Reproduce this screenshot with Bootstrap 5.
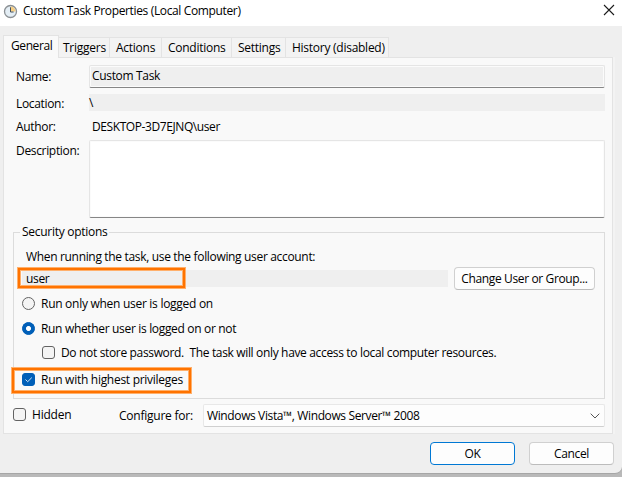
<!DOCTYPE html>
<html lang="en">
<head>
<meta charset="utf-8">
<title>Custom Task Properties</title>
<link href="https://cdn.jsdelivr.net/npm/bootstrap@5.3.0/dist/css/bootstrap.min.css" rel="stylesheet">
<style>
body{width:622px;height:477px;overflow:hidden;background:#b9b9b9;font:12px/16px "Segoe UI","Open Sans","Noto Sans",sans-serif;color:#000;letter-spacing:-.33px}
span,label{white-space:pre}
.dialog{height:474px;background:#efefef;border-bottom:1px solid #a6a6a6;border-radius:0 0 7px 0}
.titlebar{height:26px;padding:0 7px 4px 3px}
.title-text{padding-left:5px;letter-spacing:-.36px}
.tabs{height:31px;padding:9px 0 0 3px;letter-spacing:-.26px}
.tabs .nav-link{height:20px;padding:2px 0 0 6px;color:#000;background:#f3f3f3;border:1px solid #e3e3e3;border-width:1px 1px 0 0;border-radius:0;line-height:16px}
.tabs .nav-link.active{height:23px;width:56px;padding:2px 0 0 7px;background:#f9f9f9;border-width:1px 1px 0 1px;margin-bottom:-1px;position:relative;z-index:1}
.panel{width:610px;height:377px;margin-left:3px;padding:7px 7px 0 9px;background:#f9f9f9;border:1px solid #e3e3e3;box-shadow:2px 0 0 #f3f3f3}
.line{display:flex;align-items:center}
.name-label{width:76px;padding-left:3px}
.field{width:516px;background:#efefef}
.edit{border:1px solid #e5e5e5;border-bottom-color:#868686;border-radius:2px;box-shadow:inset 0 0 0 1px #fbfbfb}
.group{width:592px;height:167px;margin-top:14px;border:1px solid #dcdcdc;padding:0 0 0 8px}
.group-title{width:fit-content;margin:-9px 0 0 -2px;padding:0 2px;background:#f9f9f9}
.form-check-input{width:13px;height:13px;margin:0;border:1px solid #626262;background-color:#f4f4f4;flex:none}
.form-check-input[type=checkbox]{border-radius:3px}
.form-check-input:checked{background-color:#005fb8;border-color:#005fb8}
.form-check-input:checked[type=radio]{background-image:radial-gradient(circle,#fff 0 2.1px,#005fb8 2.9px)}
.form-check-input:checked[type=checkbox]{background-image:none}
.tick{position:absolute;left:0;top:0}
.push{height:23px;padding:0;font-size:12px;line-height:20px;letter-spacing:-.37px;color:#000;background:#fdfdfd;border:1px solid #d0d0d0;border-bottom-color:#bcbcbc;border-radius:4px}
.push.ok{border-color:#0078d4}
.highlight{position:absolute;border:2px solid #ff7300;box-shadow:0 0 0 1px #ffb06c,inset 0 0 0 1px #ffb06c}
.combo{width:402px;height:23px;padding:0 4px 0 3px;background:#fdfdfd;border:1px solid #e8e8e8;border-bottom-color:#d0d0d0;border-radius:2px}
.tight{letter-spacing:-.41px}
.loose{letter-spacing:-.28px}
</style>
</head>
<body>
<main class="dialog">
<header class="titlebar d-flex align-items-center bg-white">
<svg width="15" height="15" viewBox="0 0 15 15" class="flex-shrink-0"><circle cx="7.5" cy="7.5" r="6" fill="#e4eef5" stroke="#8b9094" stroke-width="1.3"/><path d="M7.5 7.5V2.4A5.1 5.1 0 0 1 12.6 7.5Z" fill="#f7ce82"/><path d="M7.5 3.3V8H10.6" fill="none" stroke="#44525e"/></svg>
<span class="flex-grow-1 title-text">Custom Task Properties (Local Computer)</span>
<svg width="12" height="12" viewBox="0 0 12 12" style="margin-top:-2px"><path d="M1 1L11 11M11 1L1 11" stroke="#1b1b1b" stroke-width="1.1"/></svg>
</header>
<nav class="tabs nav flex-nowrap align-items-end">
<a class="nav-link active tight"><span>General</span></a>
<a class="nav-link" style="width:51px;padding-left:4px"><span>Triggers</span></a>
<a class="nav-link" style="width:52px"><span>Actions</span></a>
<a class="nav-link" style="width:70px"><span>Conditions</span></a>
<a class="nav-link" style="width:54px"><span>Settings</span></a>
<a class="nav-link" style="width:103px"><span>History (disabled)</span></a>
</nav>
<section class="panel">
<div class="line" style="height:23px"><div class="name-label"><span>Name:</span></div><div class="field edit line" style="height:23px;padding:0 0 1px 2px"><span>Custom Task</span></div></div>
<div class="line" style="height:17px;margin-top:6px"><div class="name-label" style="padding-top:3px"><span>Location:</span></div><div class="field line" style="height:17px"><span>\</span></div></div>
<div class="line" style="height:16px;margin-top:8px"><div class="name-label"><span>Author:</span></div><span class="tight" style="padding-left:3px">DESKTOP-3D7EJNQ\user</span></div>
<div class="d-flex" style="height:78px;margin-top:5px"><div class="name-label" style="padding-top:3px"><span>Description:</span></div><div class="field edit bg-white"></div></div>
<div class="group position-relative" role="group">
<div class="group-title"><span class="loose">Security options</span></div>
<div class="line" style="height:18px;margin-top:8px;padding-left:4px"><span>When running the task, use the following user account:</span></div>
<div class="line" style="height:23px;margin-top:1px"><div class="line" style="width:426px;height:17px;background:#efefef;padding-left:4px;margin-right:6px"><span>user</span></div><button class="btn push" style="width:141px"><span>Change User or Group...</span></button></div>
<div class="line" style="height:25px;margin-top:1px;gap:6px"><input class="form-check-input" type="radio" name="logon"><label class="loose">Run only when user is logged on</label></div>
<div class="line" style="height:25px;gap:6px"><input class="form-check-input" type="radio" name="logon" checked><label>Run whether user is logged on or not</label></div>
<div class="line" style="height:23px;padding-left:20px;gap:6px"><input class="form-check-input" type="checkbox"><label style="letter-spacing:-.34px">Do not store password.  The task will only have access to local computer resources.</label></div>
<div class="line" style="height:31px;gap:6px"><div class="position-relative d-flex"><input class="form-check-input" type="checkbox" checked><svg class="tick" width="13" height="13" viewBox="0 0 13 13"><path d="M3.5 6.5L5.7 8.7L9.8 4.6" fill="none" stroke="#d5e6f5"/></svg></div><label class="loose">Run with highest privileges</label></div>
<div class="highlight" style="left:4px;top:35px;width:167px;height:20px"></div>
<div class="highlight" style="left:-2px;top:135px;width:179px;height:25px"></div>
</div>
<div class="line" style="height:23px;margin-top:5px"><input class="form-check-input" type="checkbox" style="margin-top:-2px"><label style="width:93px;padding-left:6px;letter-spacing:-.2px;padding-bottom:1px">Hidden</label><label style="width:84px;letter-spacing:-.24px">Configure for:</label><div class="combo line justify-content-between flex-shrink-0"><span style="letter-spacing:-.38px">Windows Vista™, Windows Server™ 2008</span><svg width="10" height="6" viewBox="0 0 10 6"><path d="M.7.7L5 5L9.3.7" fill="none" stroke="#555"/></svg></div></div>
</section>
<footer class="d-flex justify-content-end" style="gap:14px;padding:8px 8px 0"><button class="btn push ok" style="width:85px"><span>OK</span></button><button class="btn push" style="width:85px"><span>Cancel</span></button></footer>
</main>
<script src="https://cdn.jsdelivr.net/npm/bootstrap@5.3.0/dist/js/bootstrap.bundle.min.js"></script>
</body>
</html>
